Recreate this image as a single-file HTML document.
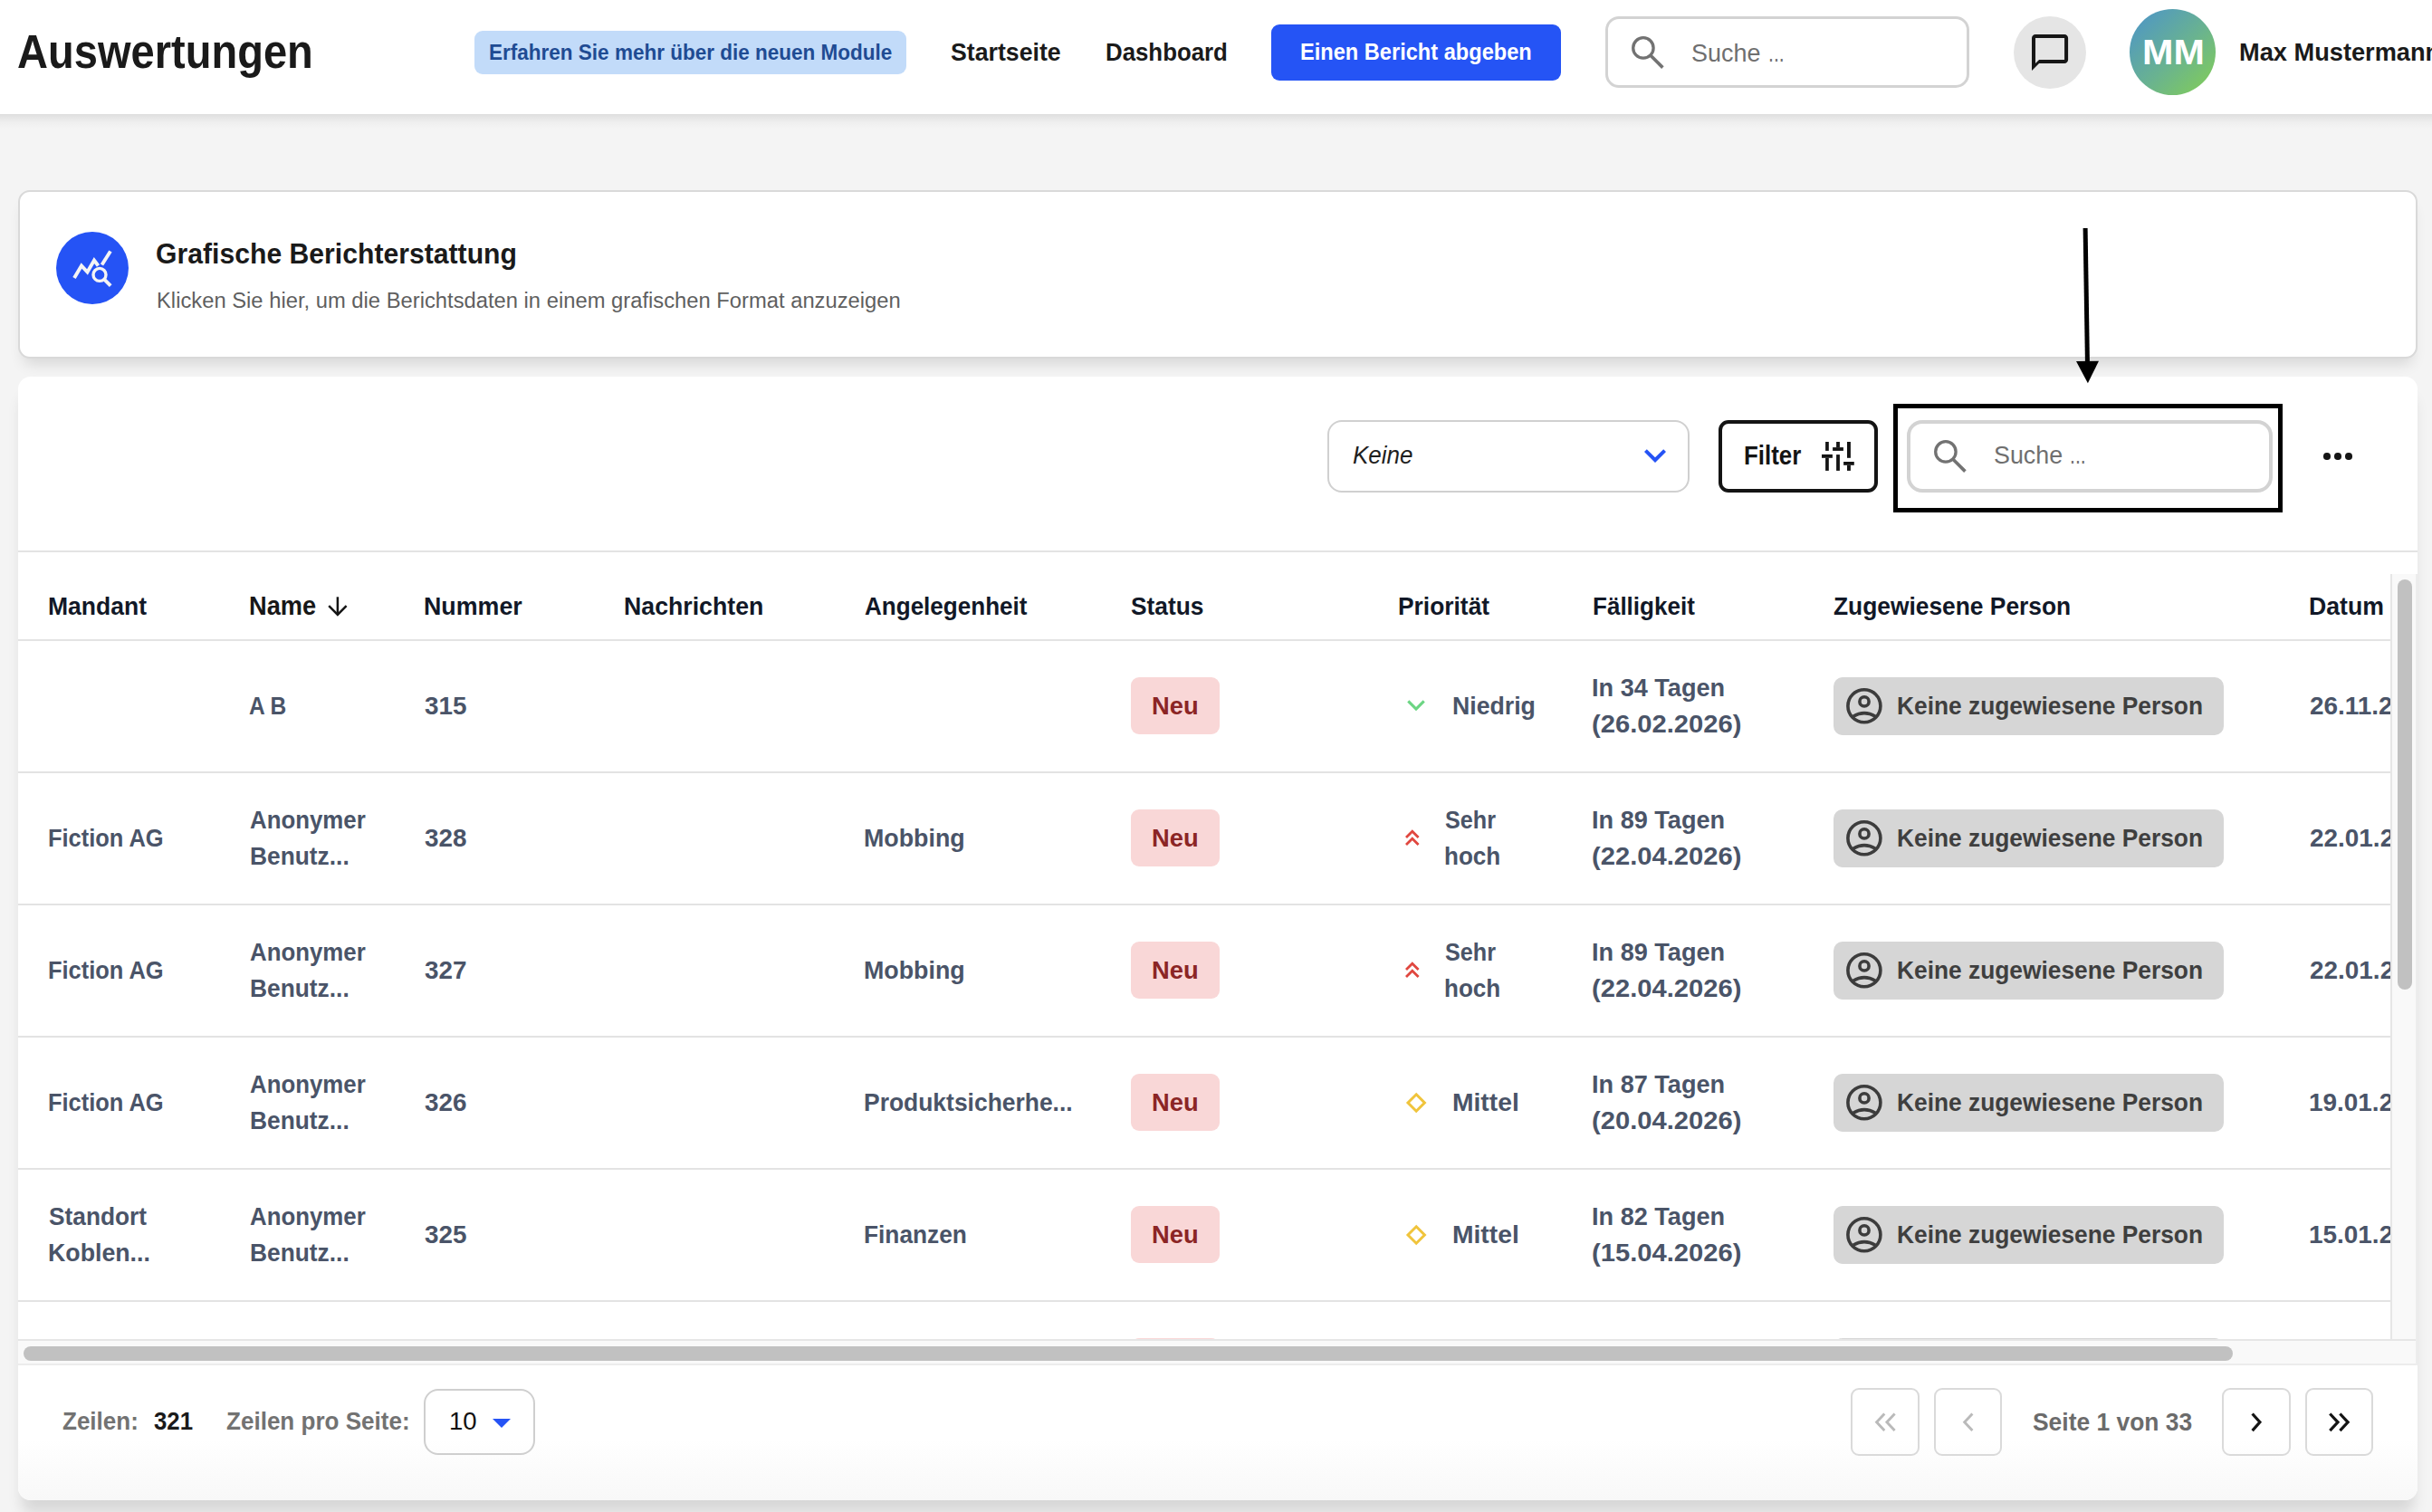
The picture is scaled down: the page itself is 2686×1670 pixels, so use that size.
<!DOCTYPE html>
<html><head><meta charset="utf-8"><style>
html,body{margin:0;padding:0;width:2686px;height:1670px;overflow:hidden;background:#f4f4f4;font-family:"Liberation Sans",sans-serif;}
div{white-space:nowrap;transform-origin:0 0;}
svg{overflow:visible}
</style></head><body>
<div style="position:absolute;left:0px;top:0px;width:2686px;height:126px;background:#fff"></div>
<div style="position:absolute;left:0px;top:126px;width:2686px;height:16px;background:linear-gradient(#dedede,#e6e6e6 25%,#efefef 60%,#f4f4f4)"></div>
<div style="position:absolute;left:19.08px;top:32.25px;font-size:50.98px;line-height:50.98px;font-weight:bold;font-style:normal;color:#1a1a1a;transform:scaleX(0.9233);">Auswertungen</div>
<div style="position:absolute;left:524px;top:34px;width:477px;height:47.5px;background:#c2dbf9;border-radius:9px"></div>
<div style="position:absolute;left:539.76px;top:45.97px;font-size:24.02px;line-height:24.02px;font-weight:bold;font-style:normal;color:#1f4b93;transform:scaleX(0.9375);">Erfahren Sie mehr über die neuen Module</div>
<div style="position:absolute;left:1050.20px;top:43.73px;font-size:27.37px;line-height:27.37px;font-weight:bold;font-style:normal;color:#1a1a1a;transform:scaleX(0.9753);">Startseite</div>
<div style="position:absolute;left:1220.86px;top:43.73px;font-size:27.37px;line-height:27.37px;font-weight:bold;font-style:normal;color:#1a1a1a;transform:scaleX(0.9437);">Dashboard</div>
<div style="position:absolute;left:1404px;top:27px;width:320px;height:62px;background:#2554f5;border-radius:9px"></div>
<div style="position:absolute;left:1435.88px;top:45.45px;font-size:25.70px;line-height:25.70px;font-weight:bold;font-style:normal;color:#ffffff;transform:scaleX(0.9189);">Einen Bericht abgeben</div>
<div style="position:absolute;left:1773px;top:18px;width:402px;height:79px;background:#fff;border:3px solid #d3d3d3;border-radius:15px;box-sizing:border-box"></div>
<svg style="position:absolute;left:1800px;top:38px;" width="42" height="42" viewBox="0 0 42 42"><circle cx="14.9" cy="14.9" r="11.2" fill="none" stroke="#727272" stroke-width="3.3"/><line x1="23" y1="23.3" x2="36.4" y2="36.6" stroke="#727272" stroke-width="3.6"/></svg>
<div style="position:absolute;left:1868.14px;top:43.92px;font-size:28.21px;line-height:28.21px;font-weight:normal;font-style:normal;color:#6f6f6f;transform:scaleX(0.9555);">Suche</div>
<div style="position:absolute;left:1952.50px;top:43.92px;font-size:28.21px;line-height:28.21px;font-weight:normal;font-style:normal;color:#6f6f6f;transform:scaleX(0.7524);">...</div>
<div style="position:absolute;left:2224px;top:18px;width:80px;height:80px;background:#e5e5e5;border-radius:50%"></div>
<svg style="position:absolute;left:2239.9px;top:33.9px;" width="48.1" height="48.1" viewBox="0 0 24 24"><path fill="#161616" d="M20 2H4c-1.1 0-2 .9-2 2v18l4-4h14c1.1 0 2-.9 2-2V4c0-1.1-.9-2-2-2zm0 14H6l-2 2V4h16v12z"/></svg>
<div style="position:absolute;left:2352px;top:10px;width:95px;height:95px;background:linear-gradient(135deg,#4b93cc 0%,#6ab38f 55%,#84d052 100%);border-radius:50%"></div>
<div style="position:absolute;left:2365.72px;top:38.32px;font-size:39.66px;line-height:39.66px;font-weight:bold;font-style:normal;color:#ffffff;transform:scaleX(1.0414);">MM</div>
<div style="position:absolute;left:2472.94px;top:43.32px;font-size:28.21px;line-height:28.21px;font-weight:bold;font-style:normal;color:#1a1a1a;transform:scaleX(0.9647);">Max Mustermann</div>
<div style="position:absolute;left:20px;top:210px;width:2650px;height:186px;background:#fff;border-radius:13px;border:2px solid #d9d9d9;box-sizing:border-box;box-shadow:0 12px 16px -6px rgba(0,0,0,0.12)"></div>
<div style="position:absolute;left:62px;top:256px;width:80px;height:80px;background:#2553f5;border-radius:50%"></div>
<svg style="position:absolute;left:62px;top:256px;" width="80" height="80" viewBox="0 0 80 80"><g fill="none" stroke="#f4f4f4"><polyline points="20,51 28,37.5 34.5,44.5 42,31.5 46.5,37.5" stroke-width="3.9" stroke-linejoin="miter"/><line x1="50.5" y1="36.5" x2="60" y2="21.5" stroke-width="3.9"/><circle cx="48" cy="47.4" r="7" stroke-width="3.4"/><line x1="53.2" y1="52.6" x2="60.2" y2="59.6" stroke-width="3.9"/></g></svg>
<div style="position:absolute;left:172.45px;top:265.14px;font-size:31.84px;line-height:31.84px;font-weight:bold;font-style:normal;color:#1a1a1a;transform:scaleX(0.9477);">Grafische Berichterstattung</div>
<div style="position:absolute;left:172.61px;top:319.67px;font-size:24.02px;line-height:24.02px;font-weight:normal;font-style:normal;color:#5f5f5f;transform:scaleX(0.9897);">Klicken Sie hier, um die Berichtsdaten in einem grafischen Format anzuzeigen</div>
<div style="position:absolute;left:20px;top:416px;width:2650px;height:1241px;background:#fff;border-radius:14px;box-shadow:0 18px 16px -4px rgba(0,0,0,0.12)"></div>
<div style="position:absolute;left:1466px;top:464px;width:400px;height:80px;border:2px solid #d0d0d0;border-radius:16px;box-sizing:border-box"></div>
<div style="position:absolute;left:1494.00px;top:488.65px;font-size:27.23px;line-height:27.23px;font-weight:normal;font-style:italic;color:#1f1f1f;transform:scaleX(0.9557);">Keine</div>
<svg style="position:absolute;left:1804px;top:478.8px;" width="48" height="48" viewBox="0 0 24 24"><path fill="#2553f5" d="M16.59 8.59L12 13.17 7.41 8.59 6 10l6 6 6-6z"/></svg>
<div style="position:absolute;left:1898px;top:464px;width:176px;height:80px;border:4px solid #141414;border-radius:11px;box-sizing:border-box"></div>
<div style="position:absolute;left:1925.80px;top:489.46px;font-size:28.63px;line-height:28.63px;font-weight:bold;font-style:normal;color:#141414;transform:scaleX(0.9050);">Filter</div>
<svg style="position:absolute;left:2000px;top:476px;" width="60" height="56" viewBox="0 0 60 56"><g fill="#141414"><rect x="16.1" y="12" width="3.7" height="9.9"/><rect x="12" y="25.9" width="11.9" height="3.9"/><rect x="16.1" y="29.8" width="3.7" height="14.1"/><rect x="28.1" y="12" width="3.8" height="6.1"/><rect x="24.1" y="18.1" width="11.8" height="3.8"/><rect x="28.1" y="26.1" width="3.8" height="17.8"/><rect x="40" y="12" width="3.9" height="17.8"/><rect x="36.1" y="34" width="11.7" height="3.8"/><rect x="40" y="37.8" width="3.9" height="6.1"/></g></svg>
<div style="position:absolute;left:2090.6px;top:446px;width:430.4000000000001px;height:120px;border:5px solid #000;box-sizing:border-box"></div>
<div style="position:absolute;left:2106px;top:464px;width:404px;height:80px;border:4px solid #d3d3d3;border-radius:17px;box-sizing:border-box"></div>
<svg style="position:absolute;left:2133.5px;top:484px;" width="42" height="42" viewBox="0 0 42 42"><circle cx="14.9" cy="14.9" r="11.2" fill="none" stroke="#727272" stroke-width="3.3"/><line x1="23" y1="23.3" x2="36.4" y2="36.6" stroke="#727272" stroke-width="3.6"/></svg>
<div style="position:absolute;left:2202.03px;top:488.87px;font-size:27.79px;line-height:27.79px;font-weight:normal;font-style:normal;color:#6f6f6f;transform:scaleX(0.9661);">Suche</div>
<div style="position:absolute;left:2286.48px;top:488.87px;font-size:27.79px;line-height:27.79px;font-weight:normal;font-style:normal;color:#6f6f6f;transform:scaleX(0.7614);">...</div>
<div style="position:absolute;left:2566.2px;top:500.1px;width:7.600000000000364px;height:7.599999999999966px;background:#151515;border-radius:50%"></div>
<div style="position:absolute;left:2578.2px;top:500.1px;width:7.600000000000364px;height:7.599999999999966px;background:#151515;border-radius:50%"></div>
<div style="position:absolute;left:2590.2px;top:500.1px;width:7.600000000000364px;height:7.599999999999966px;background:#151515;border-radius:50%"></div>
<div style="position:absolute;left:20px;top:608px;width:2650px;height:2px;background:#e3e3e3"></div>
<div style="position:absolute;left:52.76px;top:655.12px;font-size:28.21px;line-height:28.21px;font-weight:bold;font-style:normal;color:#111827;transform:scaleX(0.9407);">Mandant</div>
<div style="position:absolute;left:274.55px;top:654.65px;font-size:28.77px;line-height:28.77px;font-weight:bold;font-style:normal;color:#171717;transform:scaleX(0.9464);">Name</div>
<svg style="position:absolute;left:350px;top:650px;" width="50" height="50" viewBox="0 0 50 50"><g fill="none" stroke="#151515" stroke-width="2.5"><line x1="22.9" y1="9.3" x2="22.9" y2="28.5"/><polyline points="13.2,19.2 22.9,28.9 32.6,19.2"/></g></svg>
<div style="position:absolute;left:467.75px;top:655.12px;font-size:28.21px;line-height:28.21px;font-weight:bold;font-style:normal;color:#111827;transform:scaleX(0.9503);">Nummer</div>
<div style="position:absolute;left:688.55px;top:655.12px;font-size:28.21px;line-height:28.21px;font-weight:bold;font-style:normal;color:#111827;transform:scaleX(0.9467);">Nachrichten</div>
<div style="position:absolute;left:954.60px;top:655.12px;font-size:28.21px;line-height:28.21px;font-weight:bold;font-style:normal;color:#111827;transform:scaleX(0.9235);">Angelegenheit</div>
<div style="position:absolute;left:1249.10px;top:655.12px;font-size:28.21px;line-height:28.21px;font-weight:bold;font-style:normal;color:#111827;transform:scaleX(0.9332);">Status</div>
<div style="position:absolute;left:1543.87px;top:655.12px;font-size:28.21px;line-height:28.21px;font-weight:bold;font-style:normal;color:#111827;transform:scaleX(0.9347);">Priorität</div>
<div style="position:absolute;left:1759.08px;top:655.12px;font-size:28.21px;line-height:28.21px;font-weight:bold;font-style:normal;color:#111827;transform:scaleX(0.9232);">Fälligkeit</div>
<div style="position:absolute;left:2025.00px;top:655.12px;font-size:28.21px;line-height:28.21px;font-weight:bold;font-style:normal;color:#111827;transform:scaleX(0.9344);">Zugewiesene Person</div>
<div style="position:absolute;left:2550.05px;top:655.12px;font-size:28.21px;line-height:28.21px;font-weight:bold;font-style:normal;color:#111827;transform:scaleX(0.9455);">Datum</div>
<div style="position:absolute;left:20px;top:706px;width:2620px;height:2px;background:#e3e3e3"></div>
<div style="position:absolute;left:0;top:0;width:2640px;height:1479px;overflow:hidden">
<div style="position:absolute;left:275.30px;top:765.12px;font-size:28.21px;line-height:28.21px;font-weight:bold;font-style:normal;color:#4a5468;transform:scaleX(0.8692);">A B</div>
<div style="position:absolute;left:469.00px;top:765.12px;font-size:28.21px;line-height:28.21px;font-weight:bold;font-style:normal;color:#4a5468;transform:scaleX(0.9877);">315</div>
<div style="position:absolute;left:1249.2px;top:748px;width:97.79999999999995px;height:63.39999999999998px;background:#f9d7d7;border-radius:9px"></div>
<div style="position:absolute;left:1272.23px;top:765.12px;font-size:28.21px;line-height:28.21px;font-weight:bold;font-style:normal;color:#8b2525;transform:scaleX(0.9676);">Neu</div>
<svg style="position:absolute;left:1540px;top:755px;" width="50" height="50" viewBox="0 0 50 50"><polyline points="15.3,19.3 24,28 32.7,19.3" fill="none" stroke="#6cd583" stroke-width="3.1"/></svg>
<div style="position:absolute;left:1603.65px;top:765.12px;font-size:28.21px;line-height:28.21px;font-weight:bold;font-style:normal;color:#4a5468;transform:scaleX(0.9460);">Niedrig</div>
<div style="position:absolute;left:1758.04px;top:745.12px;font-size:28.21px;line-height:28.21px;font-weight:bold;font-style:normal;color:#4a5468;transform:scaleX(0.9613);">In 34 Tagen</div>
<div style="position:absolute;left:1757.97px;top:785.12px;font-size:28.21px;line-height:28.21px;font-weight:bold;font-style:normal;color:#4a5468;transform:scaleX(1.0346);">(26.02.2026)</div>
<div style="position:absolute;left:2025px;top:748px;width:431px;height:63.60000000000002px;background:#d6d6d6;border-radius:10px"></div>
<svg style="position:absolute;left:2038px;top:759px;" width="42" height="42" viewBox="0 0 42 42"><g fill="none" stroke="#3c3c3c" stroke-width="3.6"><circle cx="20.9" cy="20.7" r="18"/><circle cx="21" cy="15.9" r="5.1"/><path d="M8.7 32.3 Q21 25 33.3 32.3"/></g></svg>
<div style="position:absolute;left:2094.57px;top:765.12px;font-size:28.21px;line-height:28.21px;font-weight:bold;font-style:normal;color:#3f3f3f;transform:scaleX(0.9335);">Keine zugewiesene Person</div>
<div style="position:absolute;left:2551.00px;top:765.12px;font-size:28.21px;line-height:28.21px;font-weight:bold;font-style:normal;color:#4a5468;transform:scaleX(0.9900);">26.11.2025</div>
<div style="position:absolute;left:20px;top:852px;width:2620px;height:2px;background:#e3e3e3"></div>
<div style="position:absolute;left:52.85px;top:911.12px;font-size:28.21px;line-height:28.21px;font-weight:bold;font-style:normal;color:#4a5468;transform:scaleX(0.9020);">Fiction AG</div>
<div style="position:absolute;left:275.60px;top:891.12px;font-size:28.21px;line-height:28.21px;font-weight:bold;font-style:normal;color:#4a5468;transform:scaleX(0.9154);">Anonymer</div>
<div style="position:absolute;left:275.77px;top:931.12px;font-size:28.21px;line-height:28.21px;font-weight:bold;font-style:normal;color:#4a5468;transform:scaleX(0.9335);">Benutz...</div>
<div style="position:absolute;left:469.00px;top:911.12px;font-size:28.21px;line-height:28.21px;font-weight:bold;font-style:normal;color:#4a5468;transform:scaleX(0.9877);">328</div>
<div style="position:absolute;left:953.85px;top:911.12px;font-size:28.21px;line-height:28.21px;font-weight:bold;font-style:normal;color:#4a5468;transform:scaleX(0.9502);">Mobbing</div>
<div style="position:absolute;left:1249.2px;top:894px;width:97.79999999999995px;height:63.39999999999998px;background:#f9d7d7;border-radius:9px"></div>
<div style="position:absolute;left:1272.23px;top:911.12px;font-size:28.21px;line-height:28.21px;font-weight:bold;font-style:normal;color:#8b2525;transform:scaleX(0.9676);">Neu</div>
<svg style="position:absolute;left:1540px;top:900px;" width="50" height="50" viewBox="0 0 50 50"><g fill="none" stroke="#e0473f" stroke-width="2.8"><polyline points="13,25.1 19.8,18.3 26.6,25.1"/><polyline points="13,33.1 19.8,26.3 26.6,33.1"/></g></svg>
<div style="position:absolute;left:1596.25px;top:891.12px;font-size:28.21px;line-height:28.21px;font-weight:bold;font-style:normal;color:#4a5468;transform:scaleX(0.8920);">Sehr</div>
<div style="position:absolute;left:1595.33px;top:931.12px;font-size:28.21px;line-height:28.21px;font-weight:bold;font-style:normal;color:#4a5468;transform:scaleX(0.9234);">hoch</div>
<div style="position:absolute;left:1758.04px;top:891.12px;font-size:28.21px;line-height:28.21px;font-weight:bold;font-style:normal;color:#4a5468;transform:scaleX(0.9613);">In 89 Tagen</div>
<div style="position:absolute;left:1757.97px;top:931.12px;font-size:28.21px;line-height:28.21px;font-weight:bold;font-style:normal;color:#4a5468;transform:scaleX(1.0346);">(22.04.2026)</div>
<div style="position:absolute;left:2025px;top:894px;width:431px;height:63.60000000000002px;background:#d6d6d6;border-radius:10px"></div>
<svg style="position:absolute;left:2038px;top:905px;" width="42" height="42" viewBox="0 0 42 42"><g fill="none" stroke="#3c3c3c" stroke-width="3.6"><circle cx="20.9" cy="20.7" r="18"/><circle cx="21" cy="15.9" r="5.1"/><path d="M8.7 32.3 Q21 25 33.3 32.3"/></g></svg>
<div style="position:absolute;left:2094.57px;top:911.12px;font-size:28.21px;line-height:28.21px;font-weight:bold;font-style:normal;color:#3f3f3f;transform:scaleX(0.9335);">Keine zugewiesene Person</div>
<div style="position:absolute;left:2551.00px;top:911.12px;font-size:28.21px;line-height:28.21px;font-weight:bold;font-style:normal;color:#4a5468;transform:scaleX(0.9900);">22.01.2026</div>
<div style="position:absolute;left:20px;top:998px;width:2620px;height:2px;background:#e3e3e3"></div>
<div style="position:absolute;left:52.85px;top:1057.12px;font-size:28.21px;line-height:28.21px;font-weight:bold;font-style:normal;color:#4a5468;transform:scaleX(0.9020);">Fiction AG</div>
<div style="position:absolute;left:275.60px;top:1037.12px;font-size:28.21px;line-height:28.21px;font-weight:bold;font-style:normal;color:#4a5468;transform:scaleX(0.9154);">Anonymer</div>
<div style="position:absolute;left:275.77px;top:1077.12px;font-size:28.21px;line-height:28.21px;font-weight:bold;font-style:normal;color:#4a5468;transform:scaleX(0.9335);">Benutz...</div>
<div style="position:absolute;left:469.00px;top:1057.12px;font-size:28.21px;line-height:28.21px;font-weight:bold;font-style:normal;color:#4a5468;transform:scaleX(0.9877);">327</div>
<div style="position:absolute;left:953.85px;top:1057.12px;font-size:28.21px;line-height:28.21px;font-weight:bold;font-style:normal;color:#4a5468;transform:scaleX(0.9502);">Mobbing</div>
<div style="position:absolute;left:1249.2px;top:1040px;width:97.79999999999995px;height:63.40000000000009px;background:#f9d7d7;border-radius:9px"></div>
<div style="position:absolute;left:1272.23px;top:1057.12px;font-size:28.21px;line-height:28.21px;font-weight:bold;font-style:normal;color:#8b2525;transform:scaleX(0.9676);">Neu</div>
<svg style="position:absolute;left:1540px;top:1046px;" width="50" height="50" viewBox="0 0 50 50"><g fill="none" stroke="#e0473f" stroke-width="2.8"><polyline points="13,25.1 19.8,18.3 26.6,25.1"/><polyline points="13,33.1 19.8,26.3 26.6,33.1"/></g></svg>
<div style="position:absolute;left:1596.25px;top:1037.12px;font-size:28.21px;line-height:28.21px;font-weight:bold;font-style:normal;color:#4a5468;transform:scaleX(0.8920);">Sehr</div>
<div style="position:absolute;left:1595.33px;top:1077.12px;font-size:28.21px;line-height:28.21px;font-weight:bold;font-style:normal;color:#4a5468;transform:scaleX(0.9234);">hoch</div>
<div style="position:absolute;left:1758.04px;top:1037.12px;font-size:28.21px;line-height:28.21px;font-weight:bold;font-style:normal;color:#4a5468;transform:scaleX(0.9613);">In 89 Tagen</div>
<div style="position:absolute;left:1757.97px;top:1077.12px;font-size:28.21px;line-height:28.21px;font-weight:bold;font-style:normal;color:#4a5468;transform:scaleX(1.0346);">(22.04.2026)</div>
<div style="position:absolute;left:2025px;top:1040px;width:431px;height:63.59999999999991px;background:#d6d6d6;border-radius:10px"></div>
<svg style="position:absolute;left:2038px;top:1051px;" width="42" height="42" viewBox="0 0 42 42"><g fill="none" stroke="#3c3c3c" stroke-width="3.6"><circle cx="20.9" cy="20.7" r="18"/><circle cx="21" cy="15.9" r="5.1"/><path d="M8.7 32.3 Q21 25 33.3 32.3"/></g></svg>
<div style="position:absolute;left:2094.57px;top:1057.12px;font-size:28.21px;line-height:28.21px;font-weight:bold;font-style:normal;color:#3f3f3f;transform:scaleX(0.9335);">Keine zugewiesene Person</div>
<div style="position:absolute;left:2551.00px;top:1057.12px;font-size:28.21px;line-height:28.21px;font-weight:bold;font-style:normal;color:#4a5468;transform:scaleX(0.9900);">22.01.2026</div>
<div style="position:absolute;left:20px;top:1144px;width:2620px;height:2px;background:#e3e3e3"></div>
<div style="position:absolute;left:52.85px;top:1203.12px;font-size:28.21px;line-height:28.21px;font-weight:bold;font-style:normal;color:#4a5468;transform:scaleX(0.9020);">Fiction AG</div>
<div style="position:absolute;left:275.60px;top:1183.12px;font-size:28.21px;line-height:28.21px;font-weight:bold;font-style:normal;color:#4a5468;transform:scaleX(0.9154);">Anonymer</div>
<div style="position:absolute;left:275.77px;top:1223.12px;font-size:28.21px;line-height:28.21px;font-weight:bold;font-style:normal;color:#4a5468;transform:scaleX(0.9335);">Benutz...</div>
<div style="position:absolute;left:469.00px;top:1203.12px;font-size:28.21px;line-height:28.21px;font-weight:bold;font-style:normal;color:#4a5468;transform:scaleX(0.9877);">326</div>
<div style="position:absolute;left:953.86px;top:1203.12px;font-size:28.21px;line-height:28.21px;font-weight:bold;font-style:normal;color:#4a5468;transform:scaleX(0.9374);">Produktsicherhe...</div>
<div style="position:absolute;left:1249.2px;top:1186px;width:97.79999999999995px;height:63.40000000000009px;background:#f9d7d7;border-radius:9px"></div>
<div style="position:absolute;left:1272.23px;top:1203.12px;font-size:28.21px;line-height:28.21px;font-weight:bold;font-style:normal;color:#8b2525;transform:scaleX(0.9676);">Neu</div>
<svg style="position:absolute;left:1540px;top:1193px;" width="50" height="50" viewBox="0 0 50 50"><polygon points="24.2,15.8 33.4,25 24.2,34.2 15,25" fill="none" stroke="#f0c43c" stroke-width="3"/></svg>
<div style="position:absolute;left:1604.00px;top:1203.12px;font-size:28.21px;line-height:28.21px;font-weight:bold;font-style:normal;color:#4a5468;transform:scaleX(1.0014);">Mittel</div>
<div style="position:absolute;left:1758.04px;top:1183.12px;font-size:28.21px;line-height:28.21px;font-weight:bold;font-style:normal;color:#4a5468;transform:scaleX(0.9613);">In 87 Tagen</div>
<div style="position:absolute;left:1757.97px;top:1223.12px;font-size:28.21px;line-height:28.21px;font-weight:bold;font-style:normal;color:#4a5468;transform:scaleX(1.0346);">(20.04.2026)</div>
<div style="position:absolute;left:2025px;top:1186px;width:431px;height:63.59999999999991px;background:#d6d6d6;border-radius:10px"></div>
<svg style="position:absolute;left:2038px;top:1197px;" width="42" height="42" viewBox="0 0 42 42"><g fill="none" stroke="#3c3c3c" stroke-width="3.6"><circle cx="20.9" cy="20.7" r="18"/><circle cx="21" cy="15.9" r="5.1"/><path d="M8.7 32.3 Q21 25 33.3 32.3"/></g></svg>
<div style="position:absolute;left:2094.57px;top:1203.12px;font-size:28.21px;line-height:28.21px;font-weight:bold;font-style:normal;color:#3f3f3f;transform:scaleX(0.9335);">Keine zugewiesene Person</div>
<div style="position:absolute;left:2550.01px;top:1203.12px;font-size:28.21px;line-height:28.21px;font-weight:bold;font-style:normal;color:#4a5468;transform:scaleX(0.9900);">19.01.2026</div>
<div style="position:absolute;left:20px;top:1290px;width:2620px;height:2px;background:#e3e3e3"></div>
<div style="position:absolute;left:53.50px;top:1329.12px;font-size:28.21px;line-height:28.21px;font-weight:bold;font-style:normal;color:#4a5468;transform:scaleX(0.9318);">Standort</div>
<div style="position:absolute;left:52.55px;top:1369.12px;font-size:28.21px;line-height:28.21px;font-weight:bold;font-style:normal;color:#4a5468;transform:scaleX(0.9480);">Koblen...</div>
<div style="position:absolute;left:275.60px;top:1329.12px;font-size:28.21px;line-height:28.21px;font-weight:bold;font-style:normal;color:#4a5468;transform:scaleX(0.9154);">Anonymer</div>
<div style="position:absolute;left:275.77px;top:1369.12px;font-size:28.21px;line-height:28.21px;font-weight:bold;font-style:normal;color:#4a5468;transform:scaleX(0.9335);">Benutz...</div>
<div style="position:absolute;left:469.00px;top:1349.12px;font-size:28.21px;line-height:28.21px;font-weight:bold;font-style:normal;color:#4a5468;transform:scaleX(0.9877);">325</div>
<div style="position:absolute;left:953.87px;top:1349.12px;font-size:28.21px;line-height:28.21px;font-weight:bold;font-style:normal;color:#4a5468;transform:scaleX(0.9317);">Finanzen</div>
<div style="position:absolute;left:1249.2px;top:1332px;width:97.79999999999995px;height:63.40000000000009px;background:#f9d7d7;border-radius:9px"></div>
<div style="position:absolute;left:1272.23px;top:1349.12px;font-size:28.21px;line-height:28.21px;font-weight:bold;font-style:normal;color:#8b2525;transform:scaleX(0.9676);">Neu</div>
<svg style="position:absolute;left:1540px;top:1339px;" width="50" height="50" viewBox="0 0 50 50"><polygon points="24.2,15.8 33.4,25 24.2,34.2 15,25" fill="none" stroke="#f0c43c" stroke-width="3"/></svg>
<div style="position:absolute;left:1604.00px;top:1349.12px;font-size:28.21px;line-height:28.21px;font-weight:bold;font-style:normal;color:#4a5468;transform:scaleX(1.0014);">Mittel</div>
<div style="position:absolute;left:1758.04px;top:1329.12px;font-size:28.21px;line-height:28.21px;font-weight:bold;font-style:normal;color:#4a5468;transform:scaleX(0.9613);">In 82 Tagen</div>
<div style="position:absolute;left:1757.97px;top:1369.12px;font-size:28.21px;line-height:28.21px;font-weight:bold;font-style:normal;color:#4a5468;transform:scaleX(1.0346);">(15.04.2026)</div>
<div style="position:absolute;left:2025px;top:1332px;width:431px;height:63.59999999999991px;background:#d6d6d6;border-radius:10px"></div>
<svg style="position:absolute;left:2038px;top:1343px;" width="42" height="42" viewBox="0 0 42 42"><g fill="none" stroke="#3c3c3c" stroke-width="3.6"><circle cx="20.9" cy="20.7" r="18"/><circle cx="21" cy="15.9" r="5.1"/><path d="M8.7 32.3 Q21 25 33.3 32.3"/></g></svg>
<div style="position:absolute;left:2094.57px;top:1349.12px;font-size:28.21px;line-height:28.21px;font-weight:bold;font-style:normal;color:#3f3f3f;transform:scaleX(0.9335);">Keine zugewiesene Person</div>
<div style="position:absolute;left:2550.01px;top:1349.12px;font-size:28.21px;line-height:28.21px;font-weight:bold;font-style:normal;color:#4a5468;transform:scaleX(0.9900);">15.01.2026</div>
<div style="position:absolute;left:20px;top:1436px;width:2620px;height:2px;background:#e3e3e3"></div>
<div style="position:absolute;left:53.50px;top:1475.12px;font-size:28.21px;line-height:28.21px;font-weight:bold;font-style:normal;color:#4a5468;transform:scaleX(0.9318);">Standort</div>
<div style="position:absolute;left:52.55px;top:1515.12px;font-size:28.21px;line-height:28.21px;font-weight:bold;font-style:normal;color:#4a5468;transform:scaleX(0.9480);">Koblen...</div>
<div style="position:absolute;left:275.60px;top:1475.12px;font-size:28.21px;line-height:28.21px;font-weight:bold;font-style:normal;color:#4a5468;transform:scaleX(0.9154);">Anonymer</div>
<div style="position:absolute;left:275.77px;top:1515.12px;font-size:28.21px;line-height:28.21px;font-weight:bold;font-style:normal;color:#4a5468;transform:scaleX(0.9335);">Benutz...</div>
<div style="position:absolute;left:469.00px;top:1495.12px;font-size:28.21px;line-height:28.21px;font-weight:bold;font-style:normal;color:#4a5468;transform:scaleX(0.9668);">324</div>
<div style="position:absolute;left:953.87px;top:1495.12px;font-size:28.21px;line-height:28.21px;font-weight:bold;font-style:normal;color:#4a5468;transform:scaleX(0.9317);">Finanzen</div>
<div style="position:absolute;left:1249.2px;top:1478px;width:97.79999999999995px;height:63.40000000000009px;background:#f9d7d7;border-radius:9px"></div>
<div style="position:absolute;left:1272.23px;top:1495.12px;font-size:28.21px;line-height:28.21px;font-weight:bold;font-style:normal;color:#8b2525;transform:scaleX(0.9676);">Neu</div>
<svg style="position:absolute;left:1540px;top:1485px;" width="50" height="50" viewBox="0 0 50 50"><polygon points="24.2,15.8 33.4,25 24.2,34.2 15,25" fill="none" stroke="#f0c43c" stroke-width="3"/></svg>
<div style="position:absolute;left:1604.00px;top:1495.12px;font-size:28.21px;line-height:28.21px;font-weight:bold;font-style:normal;color:#4a5468;transform:scaleX(1.0014);">Mittel</div>
<div style="position:absolute;left:1758.04px;top:1475.12px;font-size:28.21px;line-height:28.21px;font-weight:bold;font-style:normal;color:#4a5468;transform:scaleX(0.9613);">In 82 Tagen</div>
<div style="position:absolute;left:1757.97px;top:1515.12px;font-size:28.21px;line-height:28.21px;font-weight:bold;font-style:normal;color:#4a5468;transform:scaleX(1.0346);">(15.04.2026)</div>
<div style="position:absolute;left:2025px;top:1478px;width:431px;height:63.59999999999991px;background:#d6d6d6;border-radius:10px"></div>
<svg style="position:absolute;left:2038px;top:1489px;" width="42" height="42" viewBox="0 0 42 42"><g fill="none" stroke="#3c3c3c" stroke-width="3.6"><circle cx="20.9" cy="20.7" r="18"/><circle cx="21" cy="15.9" r="5.1"/><path d="M8.7 32.3 Q21 25 33.3 32.3"/></g></svg>
<div style="position:absolute;left:2094.57px;top:1495.12px;font-size:28.21px;line-height:28.21px;font-weight:bold;font-style:normal;color:#3f3f3f;transform:scaleX(0.9335);">Keine zugewiesene Person</div>
<div style="position:absolute;left:2550.01px;top:1495.12px;font-size:28.21px;line-height:28.21px;font-weight:bold;font-style:normal;color:#4a5468;transform:scaleX(0.9900);">15.01.2026</div>
<div style="position:absolute;left:20px;top:1582px;width:2620px;height:2px;background:#e3e3e3"></div>
</div>
<div style="position:absolute;left:2640px;top:634px;width:28px;height:845px;background:#f9f9f9;border-left:2px solid #e6e6e6;box-sizing:border-box"></div>
<div style="position:absolute;left:2668px;top:634px;width:2px;height:874px;background:#ededed"></div>
<div style="position:absolute;left:2648px;top:640px;width:16px;height:453px;background:#c1c1c1;border-radius:8px"></div>
<div style="position:absolute;left:20px;top:1479px;width:2648px;height:29px;background:#f9f9f9;border-top:2px solid #e6e6e6;border-bottom:2px solid #ececec;box-sizing:border-box"></div>
<div style="position:absolute;left:26px;top:1487px;width:2440px;height:16px;background:#c1c1c1;border-radius:8px"></div>
<div style="position:absolute;left:20px;top:1508px;width:2650px;height:149px;background:linear-gradient(#fff 0%,#fff 55%,#f8f8f8 100%);border-radius:0 0 14px 14px"></div>
<div style="position:absolute;left:69.00px;top:1556.49px;font-size:27.65px;line-height:27.65px;font-weight:bold;font-style:normal;color:#727272;transform:scaleX(0.9416);">Zeilen:</div>
<div style="position:absolute;left:169.90px;top:1556.49px;font-size:27.65px;line-height:27.65px;font-weight:bold;font-style:normal;color:#1a1a1a;transform:scaleX(0.9334);">321</div>
<div style="position:absolute;left:250.00px;top:1556.49px;font-size:27.65px;line-height:27.65px;font-weight:bold;font-style:normal;color:#727272;transform:scaleX(0.9426);">Zeilen pro Seite:</div>
<div style="position:absolute;left:468.35px;top:1534px;width:123.14999999999998px;height:73.40000000000009px;border:2px solid #cfcfcf;border-radius:16px;box-sizing:border-box"></div>
<div style="position:absolute;left:496.02px;top:1556.27px;font-size:27.79px;line-height:27.79px;font-weight:normal;font-style:normal;color:#111111;transform:scaleX(0.9912);">10</div>
<svg style="position:absolute;left:530px;top:1546.8px;" width="48" height="48" viewBox="0 0 24 24"><path fill="#2553f5" d="M7 10l5 5 5-5z"/></svg>
<div style="position:absolute;left:2044.35px;top:1533.1px;width:75.19999999999982px;height:75.20000000000005px;border:2px solid #dadada;border-radius:9px;box-sizing:border-box"></div>
<div style="position:absolute;left:2136.3px;top:1533.1px;width:75.19999999999982px;height:75.20000000000005px;border:2px solid #dadada;border-radius:9px;box-sizing:border-box"></div>
<div style="position:absolute;left:2454.35px;top:1533.1px;width:75.19999999999982px;height:75.20000000000005px;border:2px solid #dadada;border-radius:9px;box-sizing:border-box"></div>
<div style="position:absolute;left:2546.3px;top:1533.1px;width:75.19999999999982px;height:75.20000000000005px;border:2px solid #dadada;border-radius:9px;box-sizing:border-box"></div>
<div style="position:absolute;left:2244.90px;top:1557.06px;font-size:27.09px;line-height:27.09px;font-weight:bold;font-style:normal;color:#6b6b6b;transform:scaleX(0.9754);">Seite 1 von 33</div>
<svg style="position:absolute;left:2044.35px;top:1533.1px;" width="75" height="75" viewBox="0 0 75 75"><g fill="none" stroke="#bababa" stroke-width="2.9"><polyline points="37.3,28.5 28.6,37.8 37.3,47.1"/><polyline points="48.6,28.5 39.9,37.8 48.6,47.1"/></g></svg>
<svg style="position:absolute;left:2136.3px;top:1533.1px;" width="75" height="75" viewBox="0 0 75 75"><polyline points="42.4,28.5 33.7,37.8 42.4,47.1" fill="none" stroke="#bababa" stroke-width="2.9"/></svg>
<svg style="position:absolute;left:2454.35px;top:1533.1px;" width="75" height="75" viewBox="0 0 75 75"><polyline points="33.6,28.5 41.9,37.8 33.6,47.1" fill="none" stroke="#141414" stroke-width="3.2"/></svg>
<svg style="position:absolute;left:2546.3px;top:1533.1px;" width="75" height="75" viewBox="0 0 75 75"><g fill="none" stroke="#141414" stroke-width="3.2"><polyline points="27.3,28.5 36,37.8 27.3,47.1"/><polyline points="38.4,28.5 47.1,37.8 38.4,47.1"/></g></svg>
<svg style="position:absolute;left:2280px;top:240px;overflow:visible" width="50" height="190" viewBox="0 0 50 190"><polygon points="20.6,12 25.6,12 27.9,159 22.9,159" fill="#000"/><polygon points="13,159 38,158.8 25.9,183.3" fill="#000"/></svg>
</body></html>
